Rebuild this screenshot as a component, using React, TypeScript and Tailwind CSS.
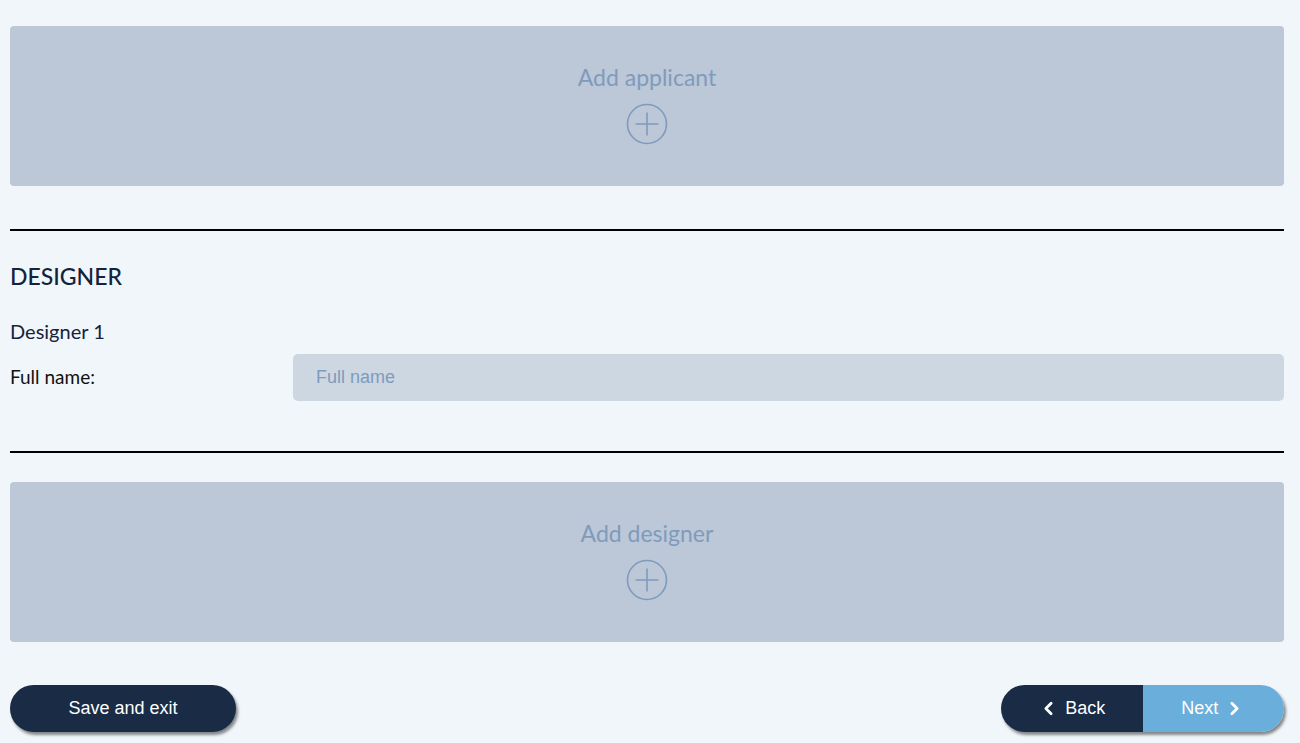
import { ChevronLeft, ChevronRight } from "lucide-react";

function PlusCircle() {
  return (
    <svg width="42" height="42" viewBox="0 0 42 42" fill="none" stroke="#7f9bbc" strokeWidth="1.6">
      <circle cx="21" cy="21" r="19.5" />
      <path d="M21 9.5v23M9.5 21h23" />
    </svg>
  );
}

function AddBox({ label }: { label: string }) {
  return (
    <button className="flex h-[160px] w-full flex-col items-center rounded-[4px] bg-[#bcc7d7] pt-[36px]">
      <span className="text-[23px] leading-[30px] text-[#7f9bbc]">{label}</span>
      <span className="mt-[11px]">
        <PlusCircle />
      </span>
    </button>
  );
}

export default function App() {
  return (
    <div
      className="min-h-[743px] bg-[#f1f6fb] pl-[10px] pr-[16px] pt-[26px]"
      style={{ fontFamily: "Lato, 'Open Sans', sans-serif" }}
    >
      <AddBox label="Add applicant" />

      <div className="mt-[43px] h-[2px] bg-black" />

      <h2 className="mt-[30px] text-[23px] font-medium leading-[30px] text-[#14233b]">DESIGNER</h2>

      <div className="mt-[26px] text-[20px] leading-[28px] text-[#14233b]">Designer 1</div>

      <div className="mt-[9px] flex items-center">
        <label className="w-[283px] text-[19px] text-[#111]">Full name:</label>
        <input
          placeholder="Full name"
          className="h-[47px] flex-1 rounded-[5px] bg-[#cdd7e2] px-[23px] text-[18px] text-[#14233b] outline-none placeholder:text-[#7f9bbc]"
          style={{ fontFamily: "'Liberation Sans', Arial, sans-serif" }}
        />
      </div>

      <div className="mt-[50px] h-[2px] bg-black" />

      <div className="mt-[29px]">
        <AddBox label="Add designer" />
      </div>

      <div
        className="mt-[43px] flex items-center justify-between pb-[12px]"
        style={{ fontFamily: "'Liberation Sans', Arial, sans-serif" }}
      >
        <button className="h-[47px] w-[226px] rounded-full bg-[#192b45] text-[18px] text-white shadow-[2px_3px_3px_rgba(0,0,0,0.45)]">
          Save and exit
        </button>
        <div className="flex h-[47px] w-[283px] overflow-hidden rounded-full shadow-[2px_3px_3px_rgba(0,0,0,0.45)]">
          <button className="flex flex-1 items-center justify-center gap-[6px] bg-[#192b45] text-[18px] text-white">
            <ChevronLeft size={21} strokeWidth={3.2} />
            Back
          </button>
          <button className="flex flex-1 items-center justify-center gap-[6px] bg-[#6aaedb] text-[18px] text-white">
            Next
            <ChevronRight size={21} strokeWidth={3.2} />
          </button>
        </div>
      </div>
    </div>
  );
}
